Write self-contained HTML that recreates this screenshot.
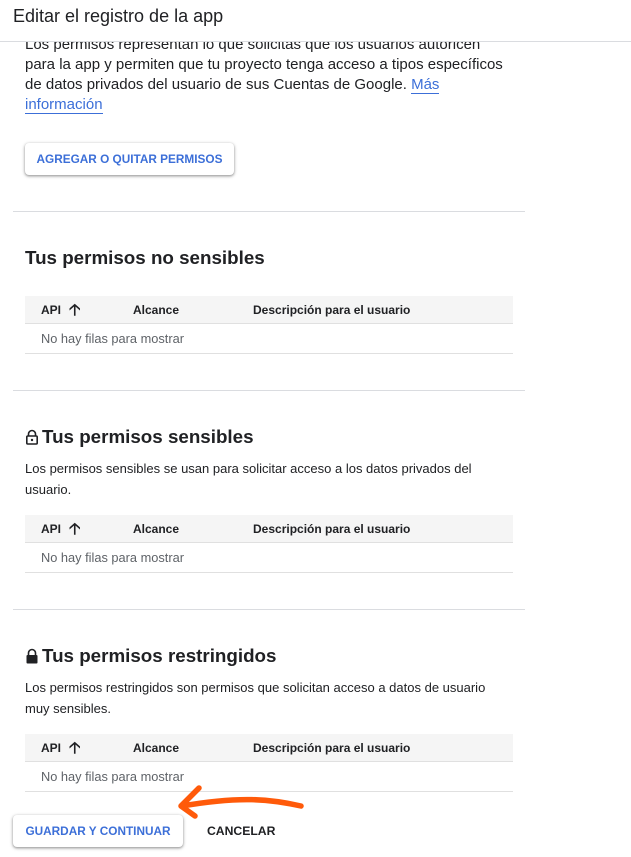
<!DOCTYPE html>
<html><head><meta charset="utf-8"><style>
*{margin:0;padding:0;box-sizing:border-box}
body{width:631px;height:857px;overflow:hidden;background:#fff;font-family:"Liberation Sans",Roboto,sans-serif;color:#202124;position:relative}
.a{position:absolute;white-space:nowrap}
.hdr{position:absolute;left:0;top:0;width:631px;height:42px;background:#fff;border-bottom:1px solid #dadce0;z-index:2}
.p{font-size:15px;line-height:20px;color:#202124}
.btn{position:absolute;background:#fff;border-radius:4px;box-shadow:0 1px 2px rgba(0,0,0,.3),0 1px 3px 1px rgba(0,0,0,.15);color:#3c6fd8;font-size:11.8px;font-weight:bold;display:flex;align-items:center;justify-content:center}
.div{position:absolute;left:13px;width:512px;height:1px;background:#dadce0}
h2{position:absolute;left:25px;font-size:18.8px;font-weight:bold;color:#202124;white-space:nowrap;display:flex;align-items:center}
.th{position:absolute;left:25px;width:488px;height:28px;background:#f5f5f5;border-bottom:1px solid #e0e0e0;font-size:12px;font-weight:bold;color:#202124}
.th span{position:absolute;top:7px}
.tr{position:absolute;left:25px;width:488px;height:30px;border-bottom:1px solid #e0e0e0;font-size:12.8px;color:#5f6368}
.tr span{position:absolute;left:16px;top:7px}
.d{position:absolute;left:25px;font-size:13px;line-height:21px;color:#202124}
</style></head><body>
<div class="hdr"><div class="a" style="left:13px;top:6px;font-size:18px;color:#202124">Editar el registro de la app</div></div>
<div class="a p" style="left:25px;top:35px">Los permisos representan lo que solicitas que los usuarios autoricen<br>para la app y permiten que tu proyecto tenga acceso a tipos específicos<br>de datos privados del usuario de sus Cuentas de Google. <span style="color:#3c6fd8;border-bottom:1px solid #3c6fd8">Más</span><br><span style="color:#3c6fd8;border-bottom:1px solid #3c6fd8">información</span></div>
<div class="btn" style="left:25px;top:143px;width:209px;height:32px">AGREGAR O QUITAR PERMISOS</div>
<div class="div" style="top:211px"></div>

<h2 style="top:247px">Tus permisos no sensibles</h2>
<div class="th" style="top:296px"><span style="left:16px">API</span><span style="left:44px;top:3px;font-size:16px">&#129121;</span><span style="left:108px">Alcance</span><span style="left:228px">Descripción para el usuario</span></div>
<div class="tr" style="top:324px"><span>No hay filas para mostrar</span></div>
<div class="div" style="top:390px"></div>

<h2 style="top:426px"><svg width="14" height="16" viewBox="0 0 14 16" style="margin-right:3px"><path d="M3.5 7V5a3.5 3.5 0 0 1 7 0v2" fill="none" stroke="#202124" stroke-width="1.6"/><rect x="1.8" y="7" width="10.4" height="8" rx="1" fill="none" stroke="#202124" stroke-width="1.6"/><circle cx="7" cy="11" r="1.2" fill="#202124"/></svg>Tus permisos sensibles</h2>
<div class="d" style="top:458px">Los permisos sensibles se usan para solicitar acceso a los datos privados del<br>usuario.</div>
<div class="th" style="top:515px"><span style="left:16px">API</span><span style="left:44px;top:3px;font-size:16px">&#129121;</span><span style="left:108px">Alcance</span><span style="left:228px">Descripción para el usuario</span></div>
<div class="tr" style="top:543px"><span>No hay filas para mostrar</span></div>
<div class="div" style="top:609px"></div>

<h2 style="top:645px"><svg width="14" height="16" viewBox="0 0 14 16" style="margin-right:3px"><path d="M3.5 7V5a3.5 3.5 0 0 1 7 0v2" fill="none" stroke="#202124" stroke-width="1.6"/><rect x="1.5" y="7" width="11" height="8.5" rx="1" fill="#202124"/></svg>Tus permisos restringidos</h2>
<div class="d" style="top:677px">Los permisos restringidos son permisos que solicitan acceso a datos de usuario<br>muy sensibles.</div>
<div class="th" style="top:734px"><span style="left:16px">API</span><span style="left:44px;top:3px;font-size:16px">&#129121;</span><span style="left:108px">Alcance</span><span style="left:228px">Descripción para el usuario</span></div>
<div class="tr" style="top:762px"><span>No hay filas para mostrar</span></div>

<div class="btn" style="left:13px;top:815px;width:170px;height:32px">GUARDAR Y CONTINUAR</div>
<div class="a" style="left:207px;top:824px;font-size:12.2px;font-weight:bold;color:#202124">CANCELAR</div>
<svg class="a" style="left:0;top:0" width="631" height="857"><path d="M301 806 C270 799 240 796 182 806 M199 788 L181 806 L195 816" fill="none" stroke="#ff5a0a" stroke-width="5.5" stroke-linecap="round" stroke-linejoin="round"/></svg>
</body></html>
